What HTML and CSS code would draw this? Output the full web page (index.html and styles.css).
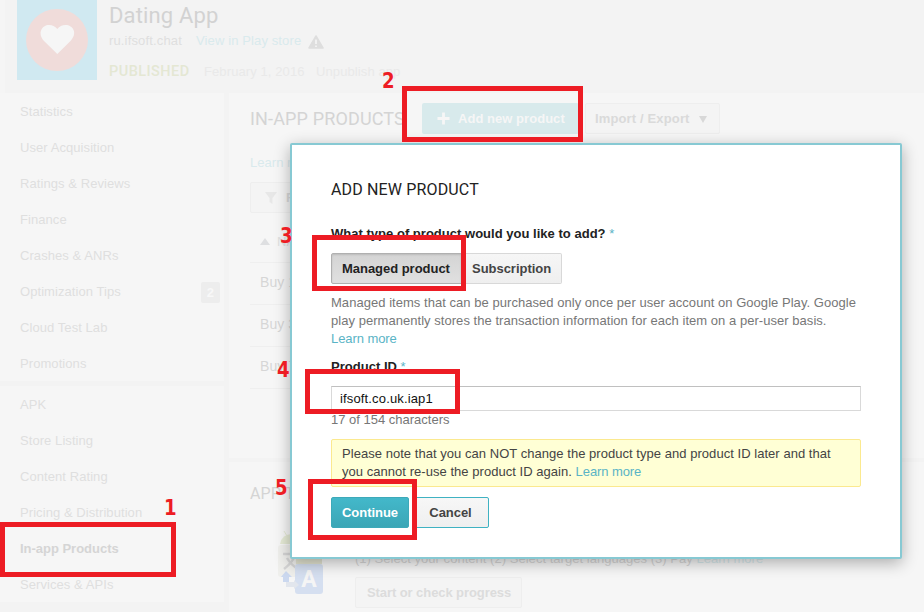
FILE: index.html
```html
<!DOCTYPE html>
<html lang="en">
<head>
<meta charset="utf-8">
<title>Dating App - In-app Products</title>
<link rel="stylesheet" href="styles.css">
</head>
<body>
<div class="page">
  <header class="header">
    <svg class="app-icon" viewBox="0 0 80 80"><rect width="80" height="80" fill="#d0e9f1"/><circle cx="40" cy="40" r="31" fill="#f0dcda"/><path d="M40.300 54 L27 41 C20 33 25 25 32 25 Q37 25 40.300 29 Q43.500 25 48.500 25 C56 25 61 33 53.500 41Z" fill="#f6f6f6"/></svg>
    <div class="app-info">
      <h1>Dating App</h1>
      <div class="app-line"><span class="pkg">ru.ifsoft.chat</span><a class="play">View in Play store</a><svg class="warn" viewBox="0 0 16 14"><path d="M8 1 L15 13 H1Z" fill="#dedede" stroke="#dedede" stroke-width="1.500" stroke-linejoin="round"/><path d="M8 4.500V9M8 10.500V12" stroke="#f5f5f5" stroke-width="1.600"/></svg></div>
      <div class="status-line"><b>PUBLISHED</b><span class="date">February 1, 2016</span><span>Unpublish app</span></div>
    </div>
  </header>
  <div class="columns">
    <nav class="sidebar">
      <ul>
        <li>Statistics</li><li>User Acquisition</li><li>Ratings &amp; Reviews</li><li>Finance</li><li>Crashes &amp; ANRs</li>
        <li>Optimization Tips <span class="badge">2</span></li><li>Cloud Test Lab</li><li>Promotions</li>
      </ul>
      <ul>
        <li>APK</li><li>Store Listing</li><li>Content Rating</li><li>Pricing &amp; Distribution</li><li class="active">In-app Products</li><li>Services &amp; APIs</li>
      </ul>
    </nav>
    <main class="main">
      <section class="products">
        <div class="toolbar">
          <h2>IN-APP PRODUCTS</h2>
          <div class="add"><svg viewBox="0 0 14 14"><path d="M7 .5V13.500M.5 7H13.500" stroke="#f6f6f6" stroke-width="3"/></svg>Add new product</div>
          <div class="import">Import / Export<svg viewBox="0 0 8 7"><path d="M0 0H8L4 7Z" fill="#d8d8d8"/></svg></div>
        </div>
        <a class="learn">Learn more</a>
        <div class="filter"><svg viewBox="0 0 12 12"><path d="M0 0H12L7.500 6V12L4.500 10V6Z" fill="#e7e7e7"/></svg>Filter</div>
        <div class="table">
          <div class="row head"><svg viewBox="0 0 10 7"><path d="M5 0L10 7H0Z" fill="#dedfe1"/></svg>NAME</div>
          <div class="row">Buy 100</div>
          <div class="row">Buy 300</div>
          <div class="row">Buy 700</div>
        </div>
      </section>
      <section class="translation">
        <h2>APP TRANSLATION</h2>
        <div class="trans-body">
          <svg class="trans-icon" viewBox="0 0 46 64">
            <path d="M2 13 Q4 3 14 3 V13Z" fill="#e5ead5"/><path d="M6 0L9 5" stroke="#e5ead5"/>
            <rect y="14" width="40" height="32" rx="3" fill="#efefec"/>
            <path d="M18 27H44V33H18Z" fill="#e2e3d0"/>
            <path d="M5 23H22M17 24Q15 31 6 38M9 27Q13 34 20 38" fill="none" stroke="#d5d5d5" stroke-width="2.500"/>
            <rect x="17" y="33" width="28" height="30" rx="3" fill="#d5dff0"/>
            <path d="M8 51H16V49L21 54L16 58V56H8Z" fill="#e2e6ed"/>
            <path d="M8 40L14 46H11V51H5V46H3Z" fill="#cbd8ef"/>
            <text x="31" y="56" class="glyph">A</text>
          </svg>
          <div class="trans-copy">
            <p>(1) Select your content (2) Select target languages (3) Pay <a>Learn more</a></p>
            <div class="progress">Start or check progress</div>
          </div>
        </div>
      </section>
    </main>
  </div>
</div>

<div class="dialog">
  <h2>ADD NEW PRODUCT</h2>
  <div class="label type-label">What type of product would you like to add? <i>*</i></div>
  <div class="segmented"><div class="seg selected">Managed product</div><div class="seg sub">Subscription</div></div>
  <div class="help"><div>Managed items that can be purchased only once per user account on Google Play. Google</div><div>play permanently stores the transaction information for each item on a per-user basis.</div><a>Learn more</a></div>
  <div class="label id-label">Product ID <i>*</i></div>
  <div class="field">ifsoft.co.uk.iap1</div>
  <div class="count">17 of 154 characters</div>
  <div class="note"><div>Please note that you can NOT change the product type and product ID later and that</div><div>you cannot re-use the product ID again. <a>Learn more</a></div></div>
  <div class="actions"><div class="btn primary">Continue</div><div class="btn">Cancel</div></div>
</div>

<div class="mark m1"></div><div class="mark m2"></div><div class="mark m3"></div><div class="mark m4"></div><div class="mark m5"></div>
<div class="num n-1">1</div><div class="num n-2">2</div><div class="num n-3">3</div><div class="num n-4">4</div><div class="num n-5">5</div>
</body>
</html>
```
FILE: styles.css
```css
* { box-sizing: border-box; }
body { margin: 0; width: 924px; height: 612px; overflow: hidden; position: relative; background: #f3f3f3; font: 13px/18px "Liberation Sans", Arial, sans-serif; color: #dfdfdf; letter-spacing: .04px; }
h1, h2, p, ul { margin: 0; padding: 0; font-weight: 400; }
ul { list-style: none; }
.page { height: 612px; overflow: hidden; }
.header { height: 93px; padding-left: 17px; display: flex; gap: 12px; background: linear-gradient(to right, #f5f5f5 5px, #f3f3f3 5px); }
.app-icon { width: 80px; height: 80px; flex: none; }
.app-info { white-space: nowrap; }
h1 { font: 22px/32px Roboto, sans-serif; color: #d2d2d2; letter-spacing: .15px; }
.app-line { display: flex; align-items: center; height: 18px; }
.pkg { width: 87px; letter-spacing: .15px; }
.play { color: #d9eaed; width: 112px; letter-spacing: .12px; }
.warn { width: 16px; height: 14px; margin-top: 2px; }
.status-line { display: flex; height: 42px; padding-top: 1px; align-items: center; color: #e9e9e9; letter-spacing: .1px; }
.status-line b { width: 95px; color: #e4e7d3; font: 500 14.500px Roboto, sans-serif; letter-spacing: .45px; }
.date { width: 112px; }
.columns { display: flex; gap: 5px; height: 519px; }
.sidebar { width: 224px; display: flex; flex-direction: column; gap: 5px; }
.sidebar ul { background: #f6f6f6; }
.sidebar li { height: 36px; padding: 2px 4px 0 20px; display: flex; align-items: center; justify-content: space-between; letter-spacing: .07px; }
.sidebar .active { font-weight: 700; color: #d5d5d5; letter-spacing: -.02px; }
.badge { width: 19px; height: 21px; border-radius: 2px; background: #ededed; color: #f8f8f8; font-weight: 700; line-height: 21px; text-align: center; }
.main { flex: 1; display: flex; flex-direction: column; gap: 4px; }
.main section { background: #f6f6f6; padding-left: 21px; }
.products { height: 365px; padding-top: 10px; }
.toolbar { display: flex; height: 31px; align-items: center; }
.main h2 { font: 18px/24px Roboto, sans-serif; color: #d4d4d4; letter-spacing: .15px; }
.toolbar h2 { width: 172px; }
.add { width: 157px; height: 31px; border-radius: 2px; background: #d8eaec; color: #f6f6f6; font-weight: 700; display: flex; align-items: center; padding-left: 15px; gap: 8px; }
.add svg { width: 13px; height: 13px; }
.import { margin-left: 6px; width: 135px; height: 31px; border: 1px solid #eee; border-radius: 2px; background: #f4f4f4; color: #dadada; font-weight: 700; display: flex; align-items: center; padding-left: 9px; gap: 9px; letter-spacing: .14px; }
.import svg { width: 8px; height: 7px; margin-top: 2px; }
.learn { display: block; color: #d9eaed; margin-top: 20px; }
.filter { margin-top: 10px; width: 80px; height: 31px; border: 1px solid #eee; background: #f4f4f4; border-radius: 2px; color: #d9d9d9; font-weight: 700; display: flex; align-items: center; padding-left: 14px; gap: 9px; }
.filter svg { width: 12px; height: 12px; }
.table { margin-top: 8px; width: 640px; }
.row { height: 42px; border-bottom: 1px solid #efefef; padding: 0 0 3px 10px; display: flex; align-items: center; color: #d6d6d6; font-size: 14px; }
.head { gap: 7px; padding-bottom: 0; font-size: 13px; color: #e0e0e0; }
.head svg { width: 10px; height: 7px; }
.translation { flex: 1; padding-top: 20px; }
.translation h2 { font-size: 16px; }
.trans-body { display: flex; margin: 25px 0 0 28px; }
.trans-icon { width: 46px; height: 64px; flex: none; }
.glyph { font: 700 23px Roboto, sans-serif; fill: #f5f5f5; text-anchor: middle; }
.trans-copy { margin-left: 31px; padding-top: 19px; white-space: nowrap; color: #d6d6d6; }
.trans-copy p { letter-spacing: .03px; }
.trans-copy a { color: #d6e9ec; }
.progress { margin-top: 9px; width: 167px; height: 31px; border: 1px solid #eee; border-radius: 2px; background: #f4f4f4; color: #dcdcdc; font-weight: 700; line-height: 30px; padding-left: 11px; letter-spacing: -.08px; }

.dialog { position: absolute; left: 290px; top: 143px; width: 612px; height: 416px; border: 2px solid #87c9d3; border-radius: 2px; background: #fff; box-shadow: 0 4px 16px rgba(0,0,0,.3); padding: 33px 39px 0; white-space: nowrap; color: #777; }
.dialog h2 { font: 16px/24px Roboto, sans-serif; color: #222; letter-spacing: .15px; }
.dialog a, .dialog i { color: #5ab4c6; font-style: normal; }
.dialog a { letter-spacing: -.08px; }
.label { font-weight: 700; color: #222; letter-spacing: .02px; }
.label i { font-weight: 400; }
.type-label { margin-top: 23px; }
.segmented { display: flex; margin-top: 10px; height: 31px; font-weight: 700; line-height: 29px; letter-spacing: -.03px; }
.seg { border: 1px solid #d8d8d8; border-radius: 0 2px 2px 0; background: linear-gradient(#f6f6f6, #efefef); color: #444; }
.selected { width: 131px; padding-left: 10px; border-color: #b0b0b0; border-radius: 2px 0 0 2px; background: linear-gradient(#d4d4d4, #e0e0e0); box-shadow: inset 0 1px 2px rgba(0,0,0,.12); color: #222; }
.sub { width: 100px; padding-left: 10px; border-left: 0; }
.help { margin-top: 10px; }
.help a { display: block; }
.id-label { margin-top: 10px; }
.field { margin-top: 10px; height: 25px; border: 1px solid #d9d9d9; border-top-color: #c0c0c0; padding-left: 8px; line-height: 23px; color: #111; letter-spacing: .15px; }
.count { letter-spacing: 0; }
.note { margin-top: 10px; height: 48px; border: 1px solid #fbe98f; border-radius: 2px; background: #ffffd5; padding: 5px 10px; color: #444; }
.actions { display: flex; gap: 3px; margin-top: 10px; }
.btn { width: 77px; height: 31px; border: 1px solid #3fb2c2; border-radius: 2px; background: linear-gradient(#f7f7f7, #efefef); font-weight: 700; line-height: 29px; text-align: center; color: #444; letter-spacing: -.05px; }
.primary { width: 78px; background: linear-gradient(#43b8ca, #3ba6b6); border-color: #3da9b9; color: #fff; }

.mark { position: absolute; border: 5px solid #ed1c24; }
.m1 { left: 0; top: 522px; width: 176px; height: 55px; }
.m2 { left: 402px; top: 86px; width: 181px; height: 56px; }
.m3 { left: 312px; top: 235px; width: 154px; height: 56px; }
.m4 { left: 305px; top: 369px; width: 155px; height: 45px; }
.m5 { left: 308px; top: 479px; width: 109px; height: 61px; }
.num { position: absolute; font: bold 21px/24px "DejaVu Sans Condensed", "DejaVu Sans", sans-serif; font-stretch: condensed; letter-spacing: 0; color: #ed1c24; transform: scaleX(.96); transform-origin: left; }
.n-1 { left: 164px; top: 496px; }
.n-2 { left: 382px; top: 69px; }
.n-3 { left: 280px; top: 224px; }
.n-4 { left: 277px; top: 358px; }
.n-5 { left: 275px; top: 476px; }
```
